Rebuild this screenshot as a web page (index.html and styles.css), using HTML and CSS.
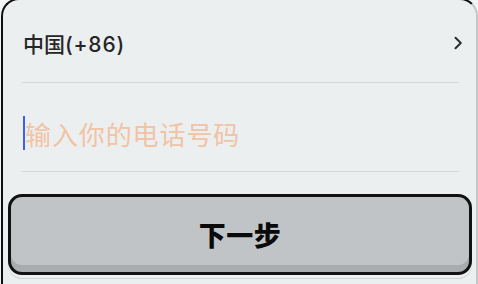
FILE: index.html
```html
<!DOCTYPE html>
<html lang="zh-CN">
<head>
<meta charset="utf-8">
<title>登录</title>
<link rel="stylesheet" href="styles.css">
</head>
<body>
<div class="card">
  <div class="row region">
    <span class="region-text">中国<span class="code">(+86)</span></span>
    <svg class="chevron" width="10" height="14" viewBox="0 0 10 14"><path d="M2.5 1.8 L7.8 7 L2.5 12.2" fill="none" stroke="#2e2e2e" stroke-width="2" stroke-linecap="round" stroke-linejoin="round"/></svg>
  </div>
  <div class="row phone">
    <span class="caret"></span>
    <span class="placeholder">输入你的电话号码</span>
  </div>
  <div class="next-btn">下一步</div>
</div>
</body>
</html>
```

FILE: styles.css
```css
html, body {
  margin: 0;
  padding: 0;
  width: 478px;
  height: 284px;
  overflow: hidden;
  background: #f3f4f5;
  font-family: "Noto Sans CJK SC", "Noto Sans", sans-serif;
}

.card {
  margin: -2px 0 0 1px;
  width: 473px;
  height: 290px;
  border: 2px solid #111;
  border-right-color: #c4c7c9;
  border-bottom: none;
  border-radius: 18px 18px 0 0;
  background: #eceff0;
  display: flex;
  flex-direction: column;
}

.row {
  margin: 0 17px 0 19px;
  border-bottom: 1px solid #d4d7d9;
  display: flex;
  align-items: center;
}

.region {
  height: 78px;
  padding-top: 4px;
  padding-left: 1px;
  justify-content: space-between;
}

.region-text {
  font-size: 21px;
  font-weight: 500;
  color: #262626;
}

.code {
  font-family: "Inter", "Noto Sans", sans-serif;
  font-size: 21px;
  font-weight: 500;
  letter-spacing: 0.8px;
}

.chevron {
  margin-right: -4px;
}

.phone {
  height: 76px;
  padding-top: 12px;
}

.caret {
  width: 2px;
  height: 34px;
  background: #3d5ef2;
  margin-left: 1px;
}

.placeholder {
  font-size: 26px;
  color: #f2c3a4;
  letter-spacing: 0.9px;
}

.next-btn {
  margin: 22px 4px 0 5px;
  height: 75px;
  border: 3px solid #111;
  border-radius: 14px;
  background: #c1c4c7;
  box-shadow: inset 0 -7px 0 #a9acaf, 0 3px 0 #eceff0, 0 4px 0 #cdd0d2;
  display: flex;
  align-items: center;
  justify-content: center;
  font-size: 27px;
  font-weight: 900;
  color: #0a0a0a;
  letter-spacing: 0.5px;
}
```
